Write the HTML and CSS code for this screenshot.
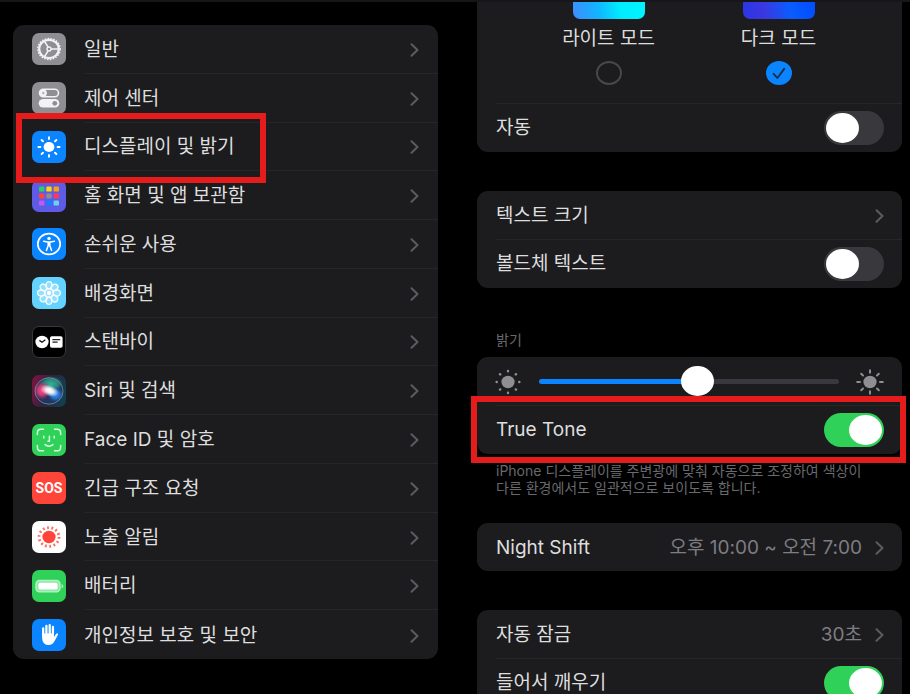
FILE: index.html
```html
<!DOCTYPE html>
<html lang="ko">
<head>
  <meta charset="UTF-8" />
  <meta name="viewport" content="width=device-width, initial-scale=1.0" />
  <title>설정 - 디스플레이 및 밝기</title>
  <link rel="stylesheet" href="styles.css">
</head>
<body>
  <svg class="defs" width="0" height="0" aria-hidden="true">
    <symbol id="chevron" viewBox="0 0 9 14">
      <path d="M1.5 1.2 L7.5 7 L1.5 12.8" fill="none" stroke="currentColor" stroke-width="2" stroke-linecap="round" stroke-linejoin="round"/>
    </symbol>
  </svg>

  <main class="screens">
    <!-- SETTINGS LIST -->
    <nav class="card menu">
      <a class="menu-row" href="#general">
        <svg class="tile" viewBox="0 0 34 32">
          <rect width="34" height="32" rx="7" fill="#8e8e93"/>
          <ellipse cx="17" cy="16" rx="11.2" ry="10.5" fill="none" stroke="#f2f2f4" stroke-width="1.4" stroke-dasharray="1.6 1.3"/>
          <ellipse cx="17" cy="16" rx="9.8" ry="9.2" fill="none" stroke="#f2f2f4" stroke-width="2.2"/>
          <path d="M12.6 8.3 L16.2 14.4 M12.6 23.7 L16.2 17.6 M19 16 H26" stroke="#f2f2f4" stroke-width="1.6"/>
          <circle cx="17" cy="16" r="2" fill="none" stroke="#f2f2f4" stroke-width="1.4"/>
        </svg>
        <span class="menu-text">일반<svg class="chevron"><use href="#chevron"/></svg></span>
      </a>
      <a class="menu-row" href="#control">
        <svg class="tile" viewBox="0 0 34 32">
          <rect width="34" height="32" rx="7" fill="#8e8e93"/>
          <rect x="7.5" y="7.2" width="19" height="7.6" rx="3.8" fill="none" stroke="#f2f2f4" stroke-width="1.6"/>
          <circle cx="11.3" cy="11" r="3.6" fill="#f2f2f4"/>
          <circle cx="11.3" cy="11" r="1.2" fill="#b4b4b8"/>
          <rect x="6.7" y="17" width="20.6" height="8.6" rx="4.3" fill="#f2f2f4"/>
          <circle cx="22.8" cy="21.3" r="2.4" fill="#8e8e93"/>
        </svg>
        <span class="menu-text">제어 센터<svg class="chevron"><use href="#chevron"/></svg></span>
      </a>
      <a class="menu-row marked" href="#display">
        <svg class="tile" viewBox="0 0 34 32">
          <rect width="34" height="32" rx="7" fill="#0a84ff"/>
          <ellipse cx="17" cy="16" rx="5.4" ry="5" fill="#fff"/>
          <path d="M17 6.2 V8 M17 24 V25.8 M6.4 16 H8.4 M25.6 16 H27.6 M9.6 9 L11 10.3 M23 21.7 L24.4 23 M24.4 9 L23 10.3 M11 21.7 L9.6 23" stroke="#fff" stroke-width="1.9" stroke-linecap="round"/>
        </svg>
        <span class="menu-text">디스플레이 및 밝기<svg class="chevron"><use href="#chevron"/></svg></span>
      </a>
      <a class="menu-row" href="#home">
        <svg class="tile" viewBox="0 0 34 32">
          <rect width="34" height="32" rx="7" fill="#5e5ce6"/>
          <rect x="7" y="6.6" width="5.4" height="5" rx="1.2" fill="#30d158"/>
          <rect x="14.3" y="6.6" width="5.4" height="5" rx="1.2" fill="#ffd60a"/>
          <rect x="21.6" y="6.6" width="5.4" height="5" rx="1.2" fill="#ff9f0a"/>
          <rect x="7" y="13.5" width="5.4" height="5" rx="1.2" fill="#ff453a"/>
          <rect x="14.3" y="13.5" width="5.4" height="5" rx="1.2" fill="#8e8e93"/>
          <rect x="21.6" y="13.5" width="5.4" height="5" rx="1.2" fill="#ff375f"/>
          <rect x="7" y="20.4" width="5.4" height="5" rx="1.2" fill="#bf5af2"/>
          <rect x="14.3" y="20.4" width="5.4" height="5" rx="1.2" fill="#0a84ff"/>
          <rect x="21.6" y="20.4" width="5.4" height="5" rx="1.2" fill="#66d4f0"/>
        </svg>
        <span class="menu-text">홈 화면 및 앱 보관함<svg class="chevron"><use href="#chevron"/></svg></span>
      </a>
      <a class="menu-row" href="#accessibility">
        <svg class="tile" viewBox="0 0 34 32">
          <rect width="34" height="32" rx="7" fill="#0a84ff"/>
          <ellipse cx="17" cy="16" rx="11.2" ry="10.4" fill="none" stroke="#fff" stroke-width="1.7"/>
          <circle cx="17" cy="10.4" r="1.7" fill="#fff"/>
          <path d="M11.6 13.2 L15.6 14 H18.4 L22.4 13.2 M16.2 14 V17.4 L14.4 22.4 M17.8 14 V17.4 L19.6 22.4 M17 14 V17.6" fill="none" stroke="#fff" stroke-width="1.5" stroke-linecap="round" stroke-linejoin="round"/>
        </svg>
        <span class="menu-text">손쉬운 사용<svg class="chevron"><use href="#chevron"/></svg></span>
      </a>
      <a class="menu-row" href="#wallpaper">
        <svg class="tile" viewBox="0 0 34 32">
          <rect width="34" height="32" rx="7" fill="#64d2ff"/>
          <g fill="#fff" fill-opacity="0.3" stroke="#f4fcff" stroke-width="1.4">
            <ellipse cx="17" cy="8.2" rx="3" ry="3.6"/>
            <ellipse cx="17" cy="8.2" rx="3" ry="3.6" transform="rotate(45 17 16)"/>
            <ellipse cx="17" cy="8.2" rx="3" ry="3.6" transform="rotate(90 17 16)"/>
            <ellipse cx="17" cy="8.2" rx="3" ry="3.6" transform="rotate(135 17 16)"/>
            <ellipse cx="17" cy="8.2" rx="3" ry="3.6" transform="rotate(180 17 16)"/>
            <ellipse cx="17" cy="8.2" rx="3" ry="3.6" transform="rotate(225 17 16)"/>
            <ellipse cx="17" cy="8.2" rx="3" ry="3.6" transform="rotate(270 17 16)"/>
            <ellipse cx="17" cy="8.2" rx="3" ry="3.6" transform="rotate(315 17 16)"/>
            <circle cx="17" cy="16" r="4.3"/>
          </g>
          <circle cx="17" cy="16" r="2.2" fill="#fff"/>
        </svg>
        <span class="menu-text">배경화면<svg class="chevron"><use href="#chevron"/></svg></span>
      </a>
      <a class="menu-row" href="#standby">
        <svg class="tile" viewBox="0 0 34 32">
          <rect x="0.5" y="0.5" width="33" height="31" rx="6.5" fill="#000" stroke="#38383a"/>
          <ellipse cx="10" cy="16" rx="6.6" ry="6.2" fill="#fff"/>
          <path d="M7.4 14.4 L10 16.2 L13.4 13.8" fill="none" stroke="#111" stroke-width="1.3"/>
          <rect x="18" y="10.2" width="12.6" height="11.6" rx="1.8" fill="#fff"/>
          <path d="M20.4 13.6 H28.2 M20.4 16.2 H25.6" stroke="#222" stroke-width="1.2"/>
        </svg>
        <span class="menu-text">스탠바이<svg class="chevron"><use href="#chevron"/></svg></span>
      </a>
      <a class="menu-row" href="#siri">
        <svg class="tile" viewBox="0 0 34 32">
          <defs>
            <linearGradient id="siriBack" x1="0" y1="0.3" x2="1" y2="0.6">
              <stop offset="0" stop-color="#7a1440"/>
              <stop offset="0.5" stop-color="#2a2440"/>
              <stop offset="1" stop-color="#123f4e"/>
            </linearGradient>
            <radialGradient id="siriPink"><stop offset="0" stop-color="#ff4f8c"/><stop offset="0.5" stop-color="#e8407c" stop-opacity="0.8"/><stop offset="1" stop-color="#d0245c" stop-opacity="0"/></radialGradient>
            <radialGradient id="siriGreen"><stop offset="0" stop-color="#36b294"/><stop offset="0.6" stop-color="#2a9a84" stop-opacity="0.8"/><stop offset="1" stop-color="#1f8a78" stop-opacity="0"/></radialGradient>
            <radialGradient id="siriBlue"><stop offset="0" stop-color="#2f8cf0"/><stop offset="0.5" stop-color="#2a80e0" stop-opacity="0.8"/><stop offset="1" stop-color="#1c4fb0" stop-opacity="0"/></radialGradient>
            <radialGradient id="siriGlow"><stop offset="0" stop-color="#fff"/><stop offset="0.4" stop-color="#fff" stop-opacity="0.9"/><stop offset="1" stop-color="#fff" stop-opacity="0"/></radialGradient>
          </defs>
          <rect width="34" height="32" rx="7" fill="url(#siriBack)"/>
          <ellipse cx="17" cy="16" rx="14" ry="13.2" fill="#22355c"/>
          <ellipse cx="19" cy="9" rx="12" ry="8" fill="url(#siriGreen)"/>
          <ellipse cx="10" cy="15.5" rx="8.5" ry="9.5" fill="url(#siriPink)"/>
          <ellipse cx="23.5" cy="19.5" rx="8.5" ry="8" fill="url(#siriBlue)"/>
          <ellipse cx="17.5" cy="15.5" rx="9.5" ry="5.6" fill="url(#siriGlow)" transform="rotate(20 17 16)"/>
          <ellipse cx="17" cy="16" rx="14" ry="13.2" fill="none" stroke="#7fa8a8" stroke-opacity="0.65" stroke-width="1"/>
        </svg>
        <span class="menu-text">Siri 및 검색<svg class="chevron"><use href="#chevron"/></svg></span>
      </a>
      <a class="menu-row" href="#faceid">
        <svg class="tile" viewBox="0 0 34 32">
          <rect width="34" height="32" rx="7" fill="#30d158"/>
          <g fill="none" stroke="#d8ffe2" stroke-width="1.5" stroke-linecap="round" stroke-linejoin="round">
            <path d="M5.4 10.6 V8.6 Q5.4 5.2 9 5.2 H11.4 M22.6 5.2 H25 Q28.6 5.2 28.6 8.6 V10.6 M28.6 21.4 V23.4 Q28.6 26.8 25 26.8 H22.6 M11.4 26.8 H9 Q5.4 26.8 5.4 23.4 V21.4"/>
            <path d="M11.8 12.2 V14 M22.2 12.2 V14 M17.4 12.2 V17.2 H16 M13 20.6 Q17 23.8 21 20.6"/>
          </g>
        </svg>
        <span class="menu-text">Face ID 및 암호<svg class="chevron"><use href="#chevron"/></svg></span>
      </a>
      <a class="menu-row" href="#sos">
        <span class="tile tile-sos" aria-hidden="true">SOS</span>
        <span class="menu-text">긴급 구조 요청<svg class="chevron"><use href="#chevron"/></svg></span>
      </a>
      <a class="menu-row" href="#exposure">
        <svg class="tile" viewBox="0 0 34 32">
          <rect width="34" height="32" rx="7" fill="#fff"/>
          <ellipse cx="17" cy="16" rx="6.6" ry="6.2" fill="#ff453a"/>
          <ellipse cx="17" cy="16" rx="10" ry="9.4" fill="none" stroke="#ff6a60" stroke-width="2.8" stroke-dasharray="1.8 2.55"/>
        </svg>
        <span class="menu-text">노출 알림<svg class="chevron"><use href="#chevron"/></svg></span>
      </a>
      <a class="menu-row" href="#battery">
        <svg class="tile" viewBox="0 0 34 32">
          <rect width="34" height="32" rx="7" fill="#30d158"/>
          <rect x="4" y="10.5" width="24" height="11.4" rx="3.6" fill="#8ee8a6" stroke="#b4f2c4" stroke-width="1.4"/>
          <rect x="6.4" y="12.8" width="19.2" height="6.8" rx="1.6" fill="#fff"/>
          <path d="M29.6 14 Q31.2 14.8 31.2 16.2 Q31.2 17.6 29.6 18.4 Z" fill="#b4f2c4"/>
        </svg>
        <span class="menu-text">배터리<svg class="chevron"><use href="#chevron"/></svg></span>
      </a>
      <a class="menu-row" href="#privacy">
        <svg class="tile" viewBox="0 0 34 32">
          <rect width="34" height="32" rx="7" fill="#0a84ff"/>
          <path d="M11.2 16 V9.4 M14.4 15 V6.9 M17.7 15 V6.2 M20.9 16 V8" stroke="#fff" stroke-width="2.3" stroke-linecap="round"/>
          <path d="M10.1 14.4 H22 V18 L24 15 Q25.2 13.8 26 14.8 Q26.2 15.4 25.7 16.2 L22.6 22 Q20.6 26 16.6 26 Q10.6 26 10.1 19.4 Z" fill="#fff"/>
        </svg>
        <span class="menu-text">개인정보 보호 및 보안<svg class="chevron"><use href="#chevron"/></svg></span>
      </a>
    </nav>

    <!-- DISPLAY & BRIGHTNESS -->
    <section class="display">
      <div class="card card-top">
        <div class="modes">
          <label class="mode">
            <span class="preview preview-light"></span>
            라이트 모드
            <input type="radio" name="mode" class="mode-radio">
          </label>
          <label class="mode">
            <span class="preview preview-dark"></span>
            다크 모드
            <span class="radio-box">
              <input type="radio" name="mode" class="mode-radio" checked>
              <svg class="tick" viewBox="0 0 26 24"><path d="M7.6 12.8 L11.4 17 L18.4 7.6" fill="none" stroke="#1c2c44" stroke-width="1.8" stroke-linecap="round" stroke-linejoin="round"/></svg>
            </span>
          </label>
        </div>
        <label class="row">자동<input type="checkbox" class="switch"></label>
      </div>

      <div class="card">
        <a class="row" href="#textsize">텍스트 크기<svg class="chevron"><use href="#chevron"/></svg></a>
        <label class="row">볼드체 텍스트<input type="checkbox" class="switch"></label>
      </div>

      <div class="group">
        <label class="caption" for="brightness">밝기</label>
        <div class="card">
          <div class="row slider-row">
            <svg class="sun" viewBox="0 0 28 26">
              <ellipse cx="14" cy="13" rx="6.6" ry="6.2" fill="#8e8e93"/>
              <path d="M14 2 V2.2 M14 23.8 V24 M2.6 13 H2.8 M25.2 13 H25.4 M6 5.2 L6.2 5.4 M22 20.6 L21.8 20.4 M22 5.2 L21.8 5.4 M6 20.6 L6.2 20.4" stroke="#8e8e93" stroke-width="2.4" stroke-linecap="round"/>
            </svg>
            <input type="range" id="brightness" class="slider" min="0" max="100" value="53">
            <svg class="sun" viewBox="0 0 28 26">
              <ellipse cx="14" cy="13" rx="6.6" ry="6.2" fill="#8e8e93"/>
              <path d="M14 1.2 V3.8 M14 22.2 V24.8 M1.2 13 H4 M24 13 H26.8 M5.2 4.8 L7 6.5 M22.8 21.2 L21 19.5 M22.8 4.8 L21 6.5 M5.2 21.2 L7 19.5" stroke="#8e8e93" stroke-width="2" stroke-linecap="round"/>
            </svg>
          </div>
          <label class="row marked">True Tone<input type="checkbox" class="switch" checked></label>
        </div>
        <p class="note">iPhone 디스플레이를 주변광에 맞춰 자동으로 조정하여 색상이 다른 환경에서도 일관적으로 보이도록 합니다.</p>
      </div>

      <div class="card">
        <a class="row" href="#nightshift">Night Shift<span class="value">오후 10:00 ~ 오전 7:00</span><svg class="chevron"><use href="#chevron"/></svg></a>
      </div>

      <div class="card">
        <a class="row" href="#autolock">자동 잠금<span class="value">30초</span><svg class="chevron"><use href="#chevron"/></svg></a>
        <label class="row">들어서 깨우기<input type="checkbox" class="switch" checked></label>
      </div>
    </section>
  </main>
</body>
</html>
```

FILE: styles.css
```css
*,
*::before,
*::after {
  box-sizing: border-box;
}

body {
  margin: 0;
  background-color: #000;
  color: #dededf;
  font-family: Inter, 'Noto Sans CJK KR', sans-serif;
  font-size: 19px;
  line-height: 24px;
  overflow: hidden;
}

a {
  color: inherit;
  text-decoration: none;
}

.defs {
  position: absolute;
}

.screens {
  display: grid;
  grid-template-columns: 1fr 1fr;
  gap: 39px;
  height: 100vh;
  padding: 0 8px 0 13px;
  border-top: 2px solid #16161a;
}

.card {
  background-color: #1c1c1e;
  border-radius: 11px;
}

/* settings list */
.menu {
  display: grid;
  grid-auto-rows: 1fr;
  margin: 23px 0 35px;
}

.menu-row {
  position: relative;
  display: flex;
  align-items: center;
  gap: 18px;
  padding-left: 19px;
}

.tile {
  flex: none;
  width: 34px;
  height: 32px;
}

.tile-sos {
  border-radius: 7px;
  background-color: #ff453a;
  color: #fff;
  font-family: Roboto, sans-serif;
  font-size: 14px;
  font-weight: bold;
  line-height: 32px;
  text-align: center;
}

.menu-text {
  flex: 1;
  align-self: stretch;
  display: flex;
  align-items: center;
  justify-content: space-between;
  padding: 2px 19px 0 0;
  border-bottom: 1px solid #262629;
}

.menu-row:last-child .menu-text {
  border-bottom: none;
}

.chevron {
  flex: none;
  width: 9px;
  height: 14px;
  color: #5c5c60;
}

/* red frames over the highlighted rows */
.marked::after {
  content: "";
  position: absolute;
  z-index: 2;
  border: 6px solid #e51c1c;
  pointer-events: none;
}

.menu-row.marked::after {
  top: -10px;
  bottom: -12px;
  left: 3px;
  width: 250px;
}

.row.marked::after {
  top: -9px;
  bottom: -9px;
  left: -6px;
  right: -4px;
}

/* display screen */
.display {
  min-height: 0;
}

.display > * + * {
  margin-top: 39px;
}

.display > .group + .card {
  margin-top: 27px;
}

.card-top {
  border-radius: 0 0 11px 11px;
}

.modes {
  display: flex;
  justify-content: center;
  padding: 0 0 18px 8px;
}

.mode {
  display: flex;
  flex-direction: column;
  align-items: center;
  width: 170px;
}

.preview {
  width: 72px;
  height: 17px;
  margin-bottom: 8px;
  border-radius: 0 0 7px 7px;
}

.preview-light {
  background: linear-gradient(80deg, #3f8cff, #12b4ff 35%, #00ecff 65%, #00f4ff);
}

.preview-dark {
  background: linear-gradient(80deg, #2a35e6, #3a38e0 30%, #0a5cff 65%, #004dff);
}

.mode-radio {
  appearance: none;
  display: block;
  width: 26px;
  height: 24px;
  margin: 0;
  border: 2px solid #48484b;
  border-radius: 50%;
}

.mode-radio:checked {
  border-color: #0a84ff;
  background-color: #0a84ff;
}

.mode > .mode-radio,
.radio-box {
  margin-top: 10px;
}

.radio-box {
  position: relative;
}

.tick {
  position: absolute;
  inset: 0;
}

.row {
  position: relative;
  display: flex;
  align-items: center;
  min-height: 48px;
  padding: 1px 18px 0 19px;
}

.row + .row,
.modes + .row {
  min-height: 49px;
}

/* divider starts at the text, not at the card edge */
.row + .row::before,
.modes + .row::before {
  content: "";
  position: absolute;
  top: 0;
  left: 19px;
  right: 0;
  border-top: 1px solid #262629;
}

.row .chevron,
.row .switch,
.value {
  margin-left: auto;
}

.value {
  color: #7d7d83;
}

.row .value + .chevron {
  margin-left: 13px;
}

.switch {
  appearance: none;
  flex: none;
  display: flex;
  align-items: center;
  width: 60px;
  height: 34px;
  margin: 0;
  padding: 0 2px;
  border-radius: 17px;
  background-color: #39393d;
}

.switch::before {
  content: "";
  width: 33px;
  height: 30px;
  border-radius: 50%;
  background-color: #fff;
}

.switch:checked {
  justify-content: flex-end;
  background-color: #30d158;
}

.caption,
.note {
  color: #69696e;
  font-size: 14px;
  line-height: 17px;
}

.caption {
  display: block;
  padding: 4px 19px 9px;
}

.note {
  margin: 8px 19px 0;
  word-break: keep-all;
}

.slider-row {
  gap: 17px;
  padding-left: 17px;
}

.sun {
  flex: none;
  width: 28px;
  height: 26px;
}

.slider {
  appearance: none;
  flex: 1;
  min-width: 0;
  height: 30px;
  margin: 0;
  background: none;
}

.slider::-webkit-slider-runnable-track {
  height: 5px;
  border-radius: 3px;
  background: linear-gradient(to right, #0a84ff 53%, #39393d 53%);
}

.slider::-webkit-slider-thumb {
  appearance: none;
  width: 33px;
  height: 30px;
  margin-top: -13px;
  border-radius: 50%;
  background-color: #fff;
}
```
